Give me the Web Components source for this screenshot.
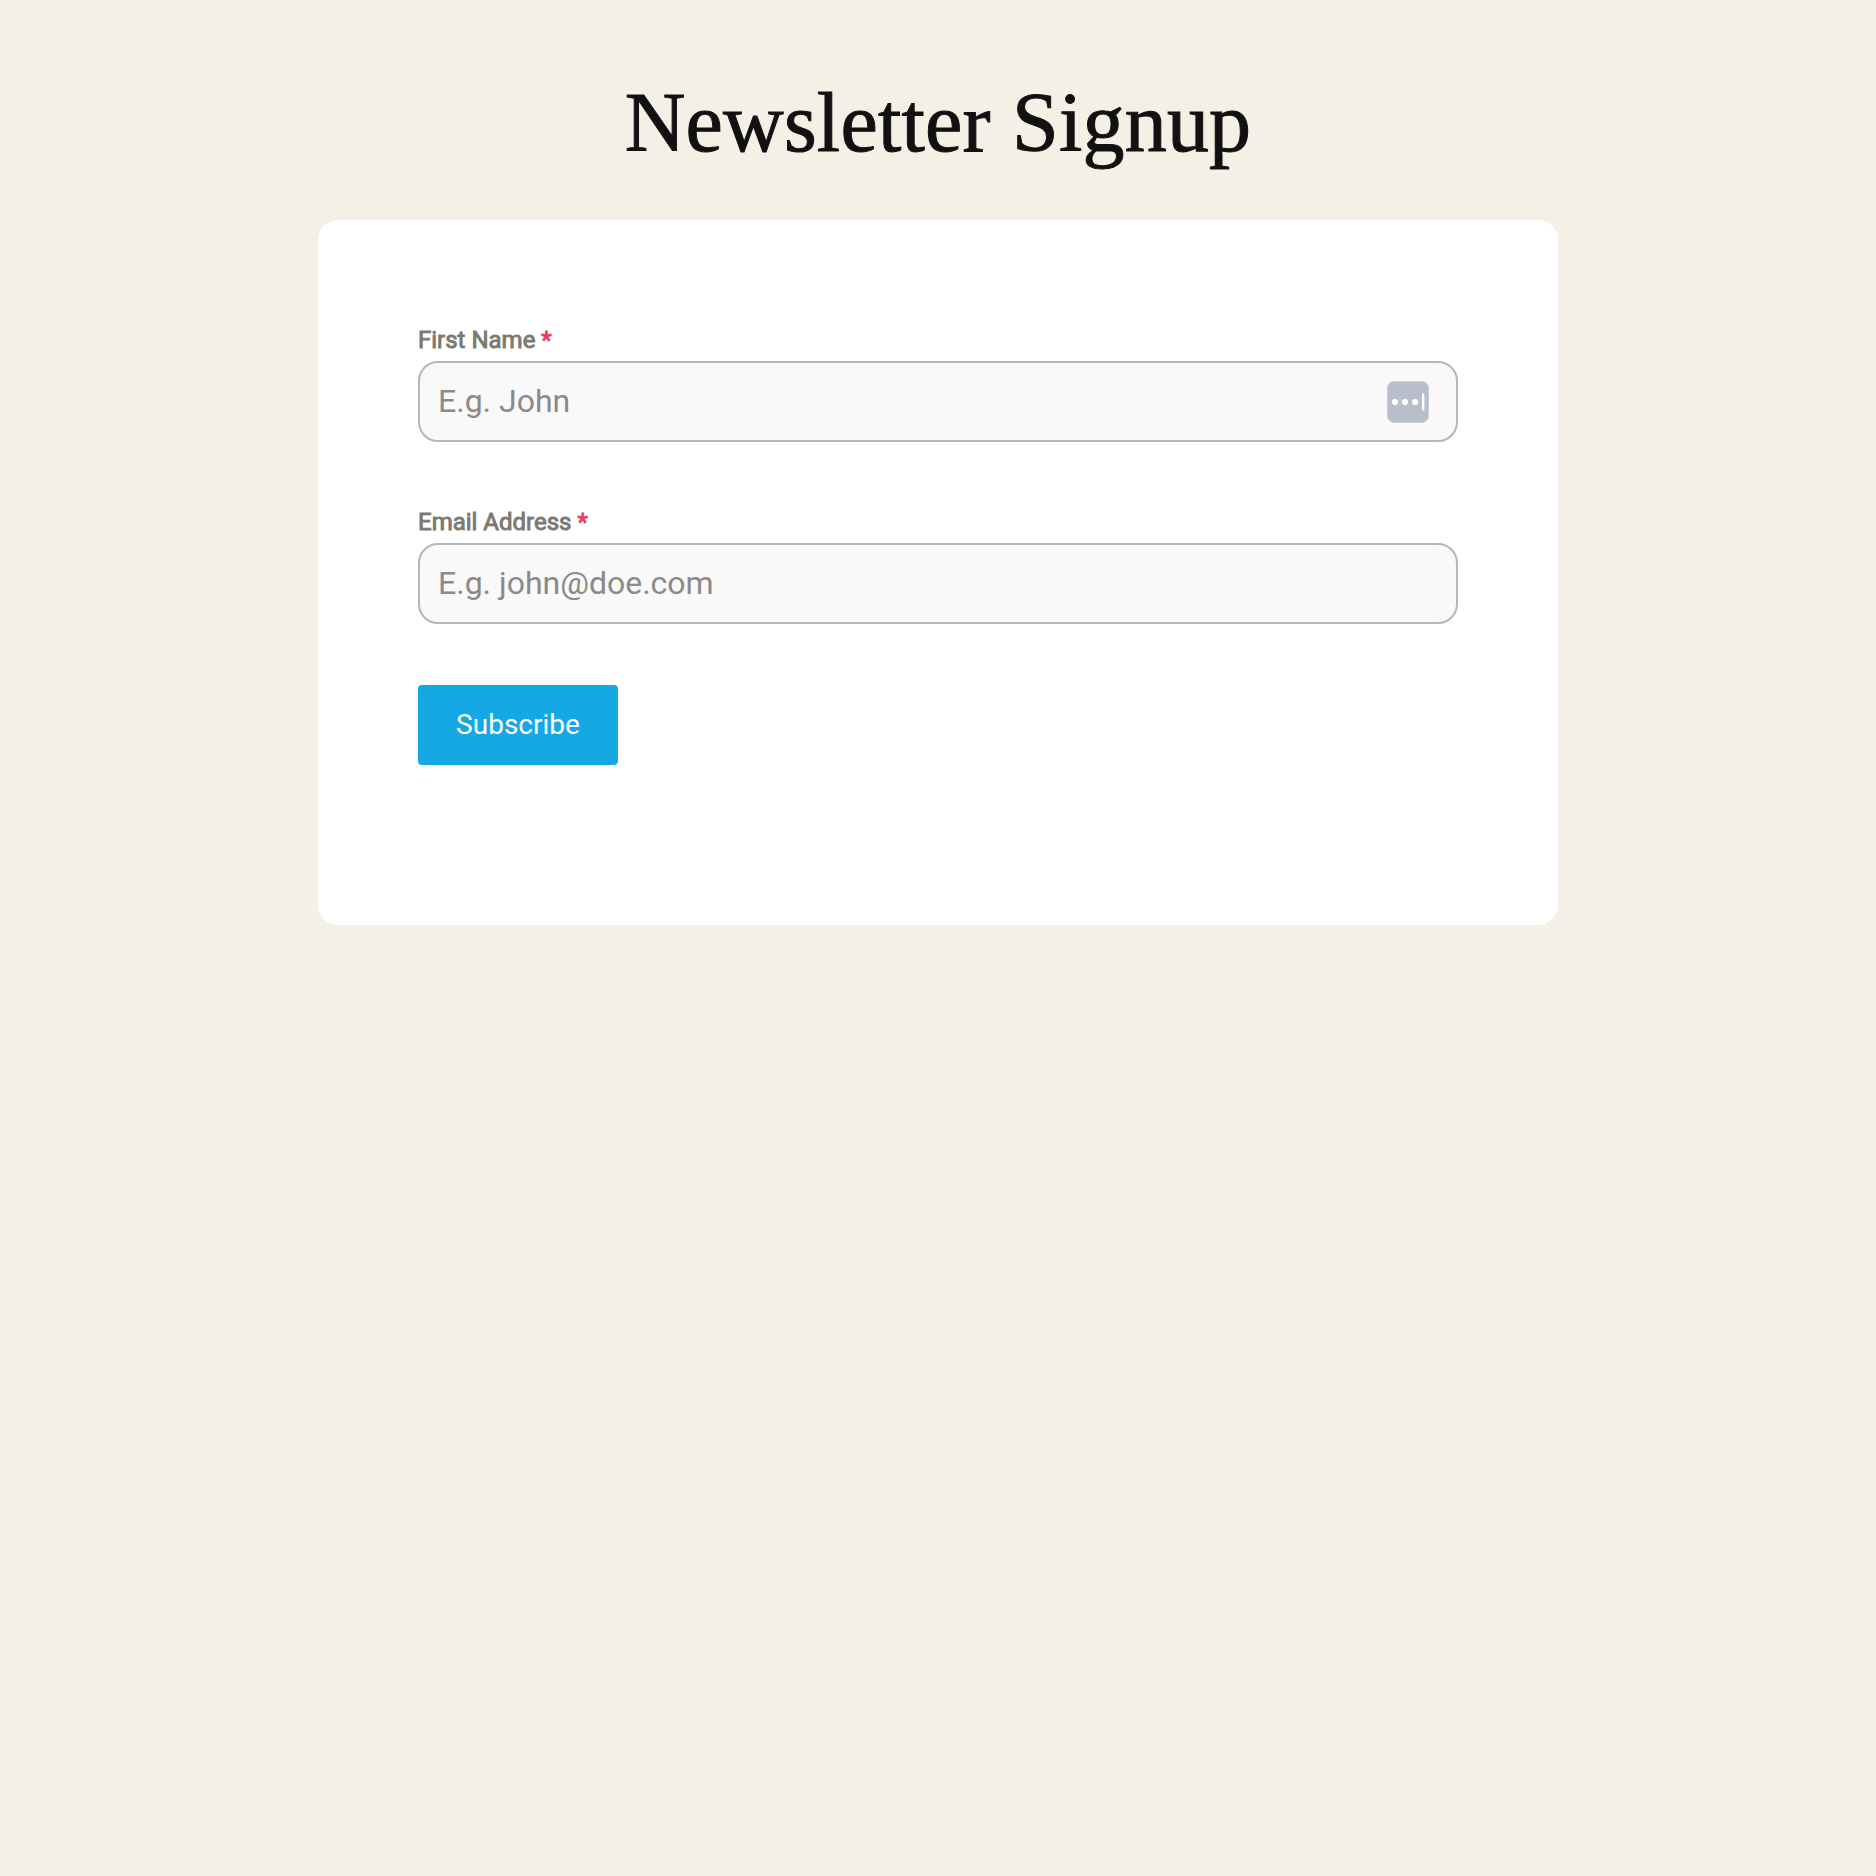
<!DOCTYPE html>
<html lang="en">
<head>
<meta charset="utf-8">
<title>Newsletter Signup</title>
<style>
html, body { margin: 0; min-height: 100%; background: #f5f0e6; }
body { font-family: Roboto, "Liberation Sans", sans-serif; }
</style>
</head>
<body>
<signup-page>
  <span slot="title">Newsletter Signup</span>
  <signup-field placeholder="E.g. John">First Name<key-badge slot="end"></key-badge></signup-field>
  <signup-field placeholder="E.g. john@doe.com" type="email">Email Address</signup-field>
  <submit-button>Subscribe</submit-button>
</signup-page>
<script>
class Base extends HTMLElement {
  constructor() {
    super();
    this.attachShadow({ mode: "open" }).innerHTML = this.render();
  }
}
customElements.define("signup-page", class extends Base {
  render() {
    return `<style>
      :host { display: flex; flex-direction: column; align-items: center; min-height: 1876px; box-sizing: border-box; padding-top: 73px; background: #f5f0e6; }
      h1 { margin: 0 0 47px; height: 100px; font: 400 84px/100px "Liberation Serif", serif; letter-spacing: .22px; -webkit-text-stroke: 1px currentColor; color: #111; white-space: nowrap; }
      form { box-sizing: border-box; width: 1240px; height: 705px; padding: 105px 100px 0; background: #fff; border-radius: 20px; display: flex; flex-direction: column; align-items: flex-start; gap: 61px; }
    </style>
    <h1><slot name="title"></slot></h1>
    <form><slot></slot></form>`;
  }
});
customElements.define("signup-field", class extends Base {
  render() {
    return `<style>
      :host { display: flex; flex-direction: column; width: 1040px; }
      :host(:first-of-type) { margin-bottom: 4px; }
      label { height: 36px; padding-top: 1px; box-sizing: border-box; font-size: 24px; line-height: 28px; color: #7a7a70; -webkit-text-stroke: 0.9px currentColor; }
      b { font-weight: 400; color: #e53f60; }
      .box { box-sizing: border-box; height: 81px; border: 2px solid #b6b6b6; border-radius: 20px; background: #f9f9f9; display: flex; align-items: center; padding: 0 27px 0 18px; }
      input { flex: 1; min-width: 0; height: 70px; margin: 0 0 2px; padding: 0; border: 0; outline: 0; background: none; font: 400 32px Roboto, "Liberation Sans", sans-serif; }
      input::placeholder { color: #8a8a8a; opacity: 1; }
    </style>
    <label for="f"><slot></slot> <b>*</b></label>
    <div class="box"><input id="f" type="${this.getAttribute("type") || "text"}" placeholder="${this.getAttribute("placeholder")}"><slot name="end"></slot></div>`;
  }
});
customElements.define("key-badge", class extends Base {
  render() {
    return `<style>:host { display: block; width: 42px; height: 42px; } svg { display: block; }</style>
    <svg width="42" height="42" viewBox="0 0 42 42">
      <rect x=".5" y=".5" width="41" height="41" rx="6.5" fill="#b8bfcb" stroke="#c9cdd6"/>
      <g fill="#fff"><circle cx="8" cy="21" r="3.1"/><circle cx="18" cy="21" r="3.1"/><circle cx="28.1" cy="21" r="3.1"/><rect x="35" y="12.3" width="2.4" height="17.2" rx="1.1"/></g>
    </svg>`;
  }
});
customElements.define("submit-button", class extends Base {
  render() {
    return `<style>
      :host { display: block; }
      button { display: flex; align-items: center; justify-content: center; width: 200px; height: 80px; padding: 0; border: 0; border-radius: 4px; background: #16a8e4; color: #fff; font: 400 28px/32px Roboto, "Liberation Sans", sans-serif; }
    </style><button type="button"><slot></slot></button>`;
  }
});
</script>
</body>
</html>
